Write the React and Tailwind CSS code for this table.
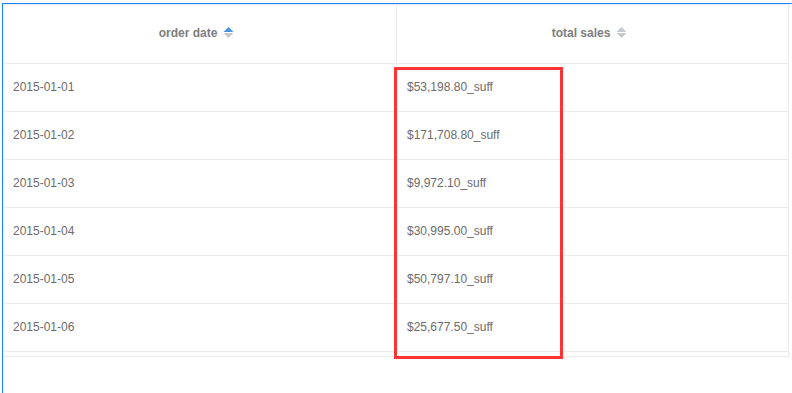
import React from "react";

const rows = [
  ["2015-01-01", "$53,198.80_suff"],
  ["2015-01-02", "$171,708.80_suff"],
  ["2015-01-03", "$9,972.10_suff"],
  ["2015-01-04", "$30,995.00_suff"],
  ["2015-01-05", "$50,797.10_suff"],
  ["2015-01-06", "$25,677.50_suff"],
];

function SortIcon({ active }) {
  return (
    <svg width="11" height="13" viewBox="0 0 11 13" className="ml-[6px]">
      <path d="M5.5 1 L10.5 6 L0.5 6 Z" fill={active ? "#4a94e8" : "#c5c8ce"} />
      <path d="M5.5 12 L10.5 7 L0.5 7 Z" fill="#c5c8ce" />
    </svg>
  );
}

export default function App() {
  return (
    <div className="relative w-[792px] h-[393px] overflow-hidden bg-white font-['Liberation_Sans',Arial,sans-serif]">
      <div className="ml-[2px] mt-[3px] h-[390px] border-l border-t border-[#1a84ff]">
        <div className="w-[786px] border-t border-r border-b border-[#ebebeb] pb-[4px]">
          <div className="flex h-[59px] border-b border-[#ebebeb]">
            <div className="flex w-[394px] items-center justify-center border-r border-[#ebebeb] pb-[3px] pr-[6px] text-[12px] font-bold text-[#7d7d7d]">
              order date
              <SortIcon active />
            </div>
            <div className="flex flex-1 items-center justify-center pb-[3px] pr-[6px] text-[12px] font-bold text-[#7d7d7d]">
              total sales
              <SortIcon />
            </div>
          </div>
          {rows.map(([d, s]) => (
            <div key={d} className="flex h-[48px] border-b border-[#ebebeb] text-[12px] text-[#6b6b6b]">
              <div className="flex w-[394px] items-center border-r border-[#ebebeb] pb-[1px] pl-[10px]">{d}</div>
              <div className="flex flex-1 items-center pb-[1px] pl-[10px]">{s}</div>
            </div>
          ))}
        </div>
      </div>
      <div className="absolute left-[394px] top-[67px] h-[292px] w-[169px] border-[3px] border-[#ff3333]" />
    </div>
  );
}
